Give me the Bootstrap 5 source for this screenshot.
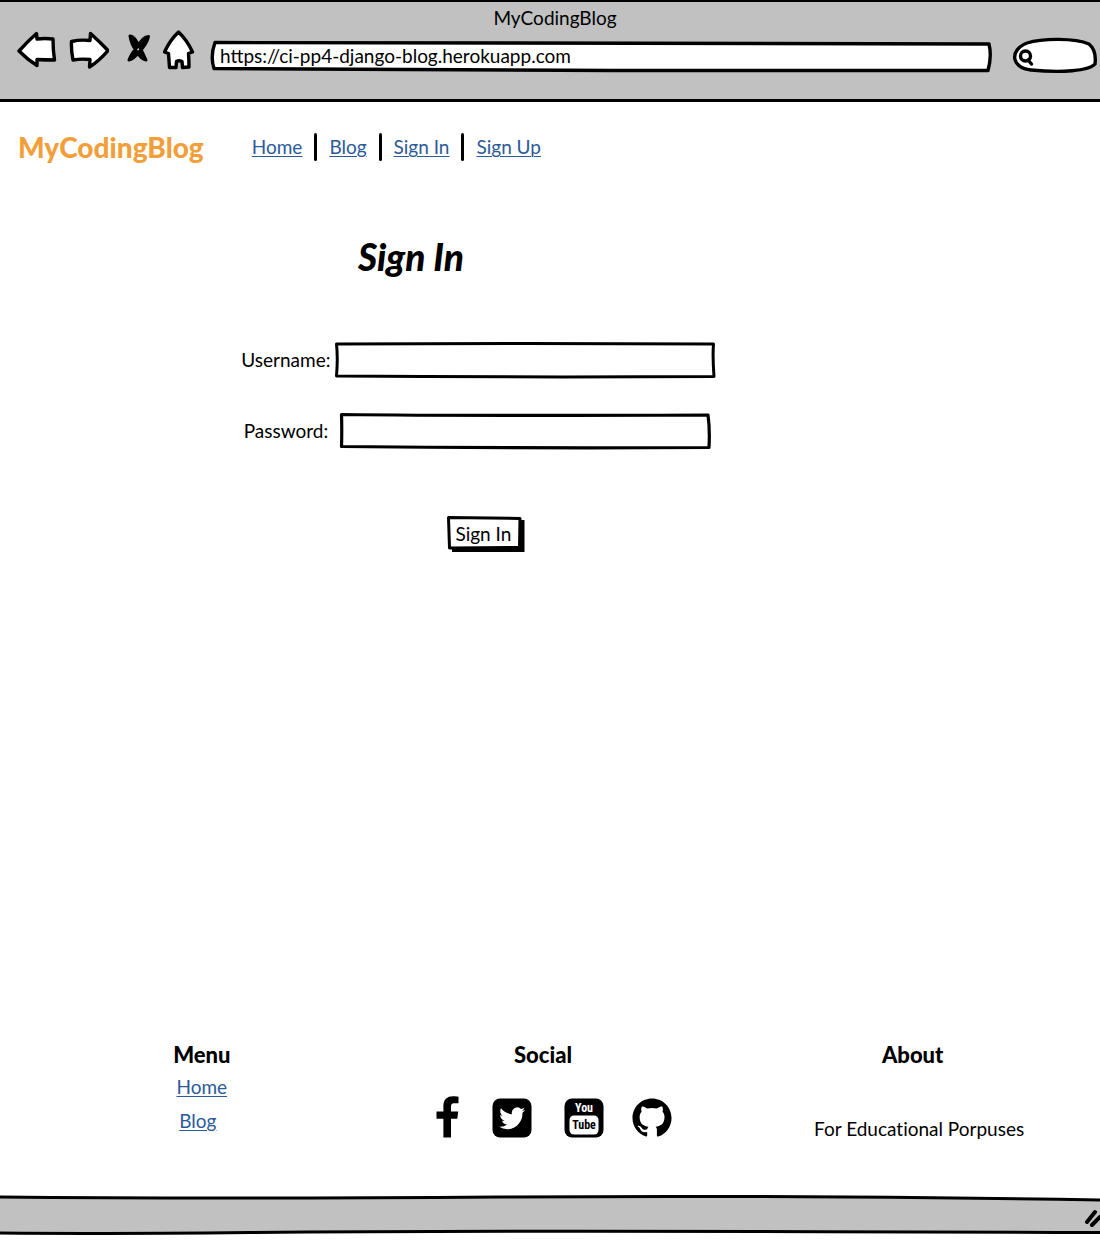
<!DOCTYPE html>
<html lang="en">
<head>
<meta charset="utf-8">
<meta name="viewport" content="width=device-width, initial-scale=1">
<title>MyCodingBlog</title>
<link href="https://cdn.jsdelivr.net/npm/bootstrap@5.3.0/dist/css/bootstrap.min.css" rel="stylesheet">
<style>
  body { font-family: Lato, "Open Sans", sans-serif; font-size: 19px; line-height: 24px; font-variant-ligatures: none; color: #000; background: #fff; }
  svg { display: block; }
  .chrome-bar { background: #c1c1c1; border-top: 2px solid #000; border-bottom: 3px solid #000; height: 102px; padding: 4px 3px 0 17px; }
  .chrome-title { padding-right: 20px; }
  .chrome-btn { border: 0; background: none; padding: 0; margin-right: 12px; }
  .chrome-btn.wide-gap { margin-right: 18px; }
  .sketch-box { position: relative; }
  .sketch-box > svg { position: absolute; inset: 0; width: 100%; height: 100%; overflow: visible; pointer-events: none; }
  .sketch-box path, .status-bar path { vector-effect: non-scaling-stroke; }
  .sketch-box > input { position: relative; width: 100%; height: 100%; border: 0; background: transparent; box-shadow: none; outline: 0; color: #000; }
  .url-box { height: 31px; margin: 11px 21px 0 4px; }
  .url-box > input { padding: 0 9px 2px; }
  .search-box { width: 84px; height: 35px; margin-top: 8px; }
  .search-box > input { padding: 0 8px 0 24px; }
  .site-nav { padding: 31px 18px 0; gap: 48px; }
  .brand { color: #f29f3b; font-size: 28px; line-height: 28px; font-weight: 900; text-decoration: none; }
  .nav-row { gap: 12px; }
  .rule { width: 3px; height: 28px; border-radius: 2px; background: #000; }
  .text-link { color: #2b5a99; text-decoration-thickness: 1px; text-underline-offset: 2px; }
  .signin { width: 474px; max-width: 100%; margin: 76px 0 0 21.9%; }
  .signin h1 { font-size: 37px; line-height: 40px; font-weight: 900; font-style: italic; margin: 0 0 65px 117px; }
  .field-row { gap: 4px; margin-bottom: 35px; }
  .field-row label { width: 90px; text-align: center; white-space: nowrap; }
  .field { height: 36px; }
  .field > input { padding: 0 12px; }
  .field-short { margin: 0 5px; }
  .go-btn { width: 78px; height: 36px; border: 0; background: none; padding: 0 5px 0 0; margin: 32px 0 0 206px; }
  .go-btn span { position: relative; }
  .foot { padding-bottom: 54px; }
  .foot h2 { font-size: 22px; line-height: 28px; font-weight: 900; margin: 0 0 6px; }
  .foot-menu { padding-left: 37px; }
  .foot-menu a { margin-bottom: 10px; }
  .foot-social h2 { padding-right: 14px; }
  .foot-social .icons { gap: 28px; margin-top: 27px; padding-left: 9px; }
  .foot-about h2 { padding-right: 8px; }
  .foot-about p { margin-top: 48px; padding-left: 5px; }
  .status-bar { height: 40px; margin-bottom: 11px; position: relative; }
  .status-bar .band { width: 100%; height: 100%; overflow: visible; }
  .status-bar .grip { position: absolute; right: 0; top: 13px; }
</style>
</head>
<body class="d-flex flex-column min-vh-100 overflow-x-hidden">

<header class="chrome-bar">
  <div class="chrome-title text-center ps-3">MyCodingBlog</div>
  <div class="d-flex align-items-start">
    <button class="chrome-btn" aria-label="Back">
      <svg width="40" height="40" viewBox="17 30 40 40" fill="#fff" stroke="#000" stroke-width="3.4" stroke-linejoin="round"><path d="M19 51 Q28 41 36.5 33.5 L37 39 Q45 38 53 39 Q53 50 54.5 60 Q45 60 37 59.5 L37 65.5 Q28 60 19 51Z"/></svg>
    </button>
    <button class="chrome-btn wide-gap" aria-label="Forward">
      <svg width="40" height="40" viewBox="69 30 40 40" fill="#fff" stroke="#000" stroke-width="3.4" stroke-linejoin="round"><path d="M108 50.5 Q100 42 90.5 33.5 L90 40.5 Q80 39.5 71.5 41.5 Q71 50 73 60 Q81 58.5 90 59.5 L89.5 67 Q99 61 108 50.5Z"/></svg>
    </button>
    <button class="chrome-btn" aria-label="Stop">
      <svg width="24" height="40" viewBox="127 30 24 40" fill="none" stroke="#000" stroke-linecap="round" stroke-linejoin="round"><path stroke-width="3" fill="#000" d="M130 36 Q134 36 138 44 Q143 53 146 60 Q141 59 137 52 Q131 44 130 36Z M148.500 36.5 Q143 37 138 46 Q131 54 129 60 Q134 59 139 52 Q147 44 148.500 36.5Z"/></svg>
    </button>
    <button class="chrome-btn" aria-label="Home page">
      <svg width="32" height="40" viewBox="163 30 32 40" fill="#fff" stroke="#000" stroke-width="3.4" stroke-linejoin="round"><path d="M178.5 32 Q187 40 192.5 52 L188.5 53.5 Q189 60 189 67 L182.5 67.5 L182 61.5 Q179 60 176.5 61.5 L176 67.5 L169.5 67.5 Q169 60 168.5 53.5 L164.5 52 Q170 40 178.5 32Z"/></svg>
    </button>
    <div class="sketch-box url-box flex-grow-1">
      <svg viewBox="0 0 780 31" preserveAspectRatio="none" fill="#fff" stroke="#000" stroke-width="3.4" stroke-linejoin="round"><path d="M4 1.5 Q300 2 777 3 Q780 15 776 29.5 L400 29.5 Q150 29 3 27.5 Q-1 15 4 1.5Z"/></svg>
      <input type="text" aria-label="Address" value="https://ci-pp4-django-blog.herokuapp.com">
    </div>
    <div class="sketch-box search-box">
      <svg viewBox="0 0 84 35" fill="#fff" stroke="#000" stroke-width="3.4" stroke-linecap="round"><path d="M18 32 C-2 30 -4 12 14 5 C30 0 62 0 76 6 C82 11 83 18 82 26 C76 33 48 35 18 32Z"/><g fill="none"><circle cx="12.5" cy="18" r="5"/><path d="M15 22 L18.5 26"/></g></svg>
      <input type="search" aria-label="Search">
    </div>
  </div>
</header>

<nav class="site-nav d-flex align-items-center">
  <a class="brand" href="#">MyCodingBlog</a>
  <div class="nav-row d-flex align-items-center">
    <a class="text-link" href="#">Home</a><span class="rule"></span>
    <a class="text-link" href="#">Blog</a><span class="rule"></span>
    <a class="text-link" href="#">Sign In</a><span class="rule"></span>
    <a class="text-link" href="#">Sign Up</a>
  </div>
</nav>

<main class="flex-grow-1">
  <form class="signin">
    <h1>Sign In</h1>
    <div class="field-row d-flex align-items-center">
      <label for="user">Username:</label>
      <div class="sketch-box field flex-grow-1">
        <svg viewBox="0 0 379 36" preserveAspectRatio="none" fill="#fff" stroke="#000" stroke-width="3" stroke-linejoin="round"><path d="M1.5 2 Q190 1 377.5 2 Q376.5 14 378 34.5 Q190 35.5 1.5 34 Q3 16 1.5 2Z"/></svg>
        <input id="user" type="text">
      </div>
    </div>
    <div class="field-row d-flex align-items-center">
      <label for="pass">Password:</label>
      <div class="sketch-box field field-short flex-grow-1">
        <svg viewBox="0 0 369 36" preserveAspectRatio="none" fill="#fff" stroke="#000" stroke-width="3.2" stroke-linejoin="round"><path d="M1.5 1.5 Q120 3 367 2 Q369 16 368 34.5 Q190 35.5 1.5 33.5 Q2 18 1.5 1.5Z"/></svg>
        <input id="pass" type="password">
      </div>
    </div>
    <button class="go-btn sketch-box text-nowrap" type="submit">
      <svg viewBox="0 0 78 36"><path d="M5 6 L77.5 4 L77.5 36 L5 36Z"/><path d="M1.5 1.5 L73 2.5 L72.5 31.5 L2.5 32Z" fill="#fff" stroke="#000" stroke-width="3" stroke-linejoin="round"/></svg>
      <span>Sign In</span>
    </button>
  </form>
</main>

<footer>
  <div class="foot row g-0 text-center">
    <div class="foot-menu col-4 d-flex flex-column align-items-center">
      <h2>Menu</h2>
      <a class="text-link" href="#">Home</a>
      <a class="text-link mb-0 me-2" href="#">Blog</a>
    </div>
    <div class="foot-social col-4">
      <h2>Social</h2>
      <div class="icons d-flex justify-content-center align-items-end">
        <a class="me-1" href="#" aria-label="Facebook"><svg width="24" height="42" viewBox="0 0 24 42"><path d="M22.5 .8V7.3H18.6C15.6 7.3 15 8.7 15 10.8V15.5H22.2L21.3 22.8H15V41.4H7.4V22.8H.5V15.5H7.4V9.9C7.4 3.6 11.2 .3 16.8 .3c2.7 0 5 .2 5.7 .5z"/></svg></a>
        <a class="me-1" href="#" aria-label="Twitter"><svg width="40" height="40" viewBox="0 0 40 40"><rect x=".5" y=".5" width="39" height="39" rx="7.5"/><path fill="#fff" transform="translate(7.2 6) scale(1.62 1.68)" d="M5.026 15c6.038 0 9.341-5.003 9.341-9.334 0-.14 0-.282-.006-.422A6.685 6.685 0 0 0 16 3.542a6.658 6.658 0 0 1-1.889.518 3.301 3.301 0 0 0 1.447-1.817 6.533 6.533 0 0 1-2.087.793A3.286 3.286 0 0 0 7.875 6.03a9.325 9.325 0 0 1-6.767-3.429 3.289 3.289 0 0 0 1.018 4.382A3.323 3.323 0 0 1 .64 6.575v.045a3.288 3.288 0 0 0 2.632 3.218 3.203 3.203 0 0 1-.865.115 3.23 3.23 0 0 1-.614-.057 3.283 3.283 0 0 0 3.067 2.277A6.588 6.588 0 0 1 .78 13.58a6.32 6.32 0 0 1-.78-.045A9.344 9.344 0 0 0 5.026 15z"/></svg></a>
        <a href="#" aria-label="YouTube"><svg width="40" height="40" viewBox="0 0 40 40"><rect x=".5" y=".5" width="39" height="39" rx="7.5"/><rect x="5.5" y="17.5" width="29" height="19" rx="4.5" fill="#fff"/><g font-family="'Roboto Condensed','Liberation Sans Narrow',Lato,sans-serif" font-weight="700" text-anchor="middle"><text x="20" y="14" font-size="12" fill="#fff">You</text><text x="20" y="31" font-size="12">Tube</text></g></svg></a>
        <a href="#" aria-label="GitHub"><svg width="40" height="40" viewBox="0 0 40 40"><path transform="translate(.5 .5) scale(2.44)" d="M8 0C3.58 0 0 3.58 0 8c0 3.54 2.29 6.53 5.47 7.59.4.07.55-.17.55-.38 0-.19-.01-.82-.01-1.49-2.01.37-2.53-.49-2.69-.94-.09-.23-.48-.94-.82-1.13-.28-.15-.68-.52-.01-.53.63-.01 1.08.58 1.23.82.72 1.21 1.87.87 2.33.66.07-.52.28-.87.51-1.07-1.78-.2-3.64-.89-3.64-3.95 0-.87.31-1.59.82-2.15-.08-.2-.36-1.02.08-2.12 0 0 .67-.21 2.2.82.64-.18 1.32-.27 2-.27.68 0 1.36.09 2 .27 1.53-1.04 2.2-.82 2.2-.82.44 1.1.16 1.92.08 2.12.51.56.82 1.27.82 2.15 0 3.07-1.87 3.75-3.65 3.95.29.25.54.73.54 1.48 0 1.07-.01 1.93-.01 2.2 0 .21.15.46.55.38A8.012 8.012 0 0 0 16 8c0-4.42-3.58-8-8-8z"/></svg></a>
      </div>
    </div>
    <div class="foot-about col-4">
      <h2>About</h2>
      <p class="mb-0">For Educational Porpuses</p>
    </div>
  </div>
  <div class="status-bar">
    <svg class="band" viewBox="0 0 1100 40" preserveAspectRatio="none" fill="#c1c1c1" stroke="#000" stroke-width="3"><path d="M-4 2 Q200 4 500 2 Q800 0 1104 5 L1104 37.5 Q500 35 250 37.5 Q100 39 -4 38Z"/></svg>
    <svg class="grip" width="16" height="20" viewBox="0 0 16 20" stroke="#000" stroke-width="4" stroke-linecap="round"><path d="M3 14 L11 4 M8 17 L16 9"/></svg>
  </div>
</footer>

<script src="https://cdn.jsdelivr.net/npm/bootstrap@5.3.0/dist/js/bootstrap.bundle.min.js"></script>
</body>
</html>
